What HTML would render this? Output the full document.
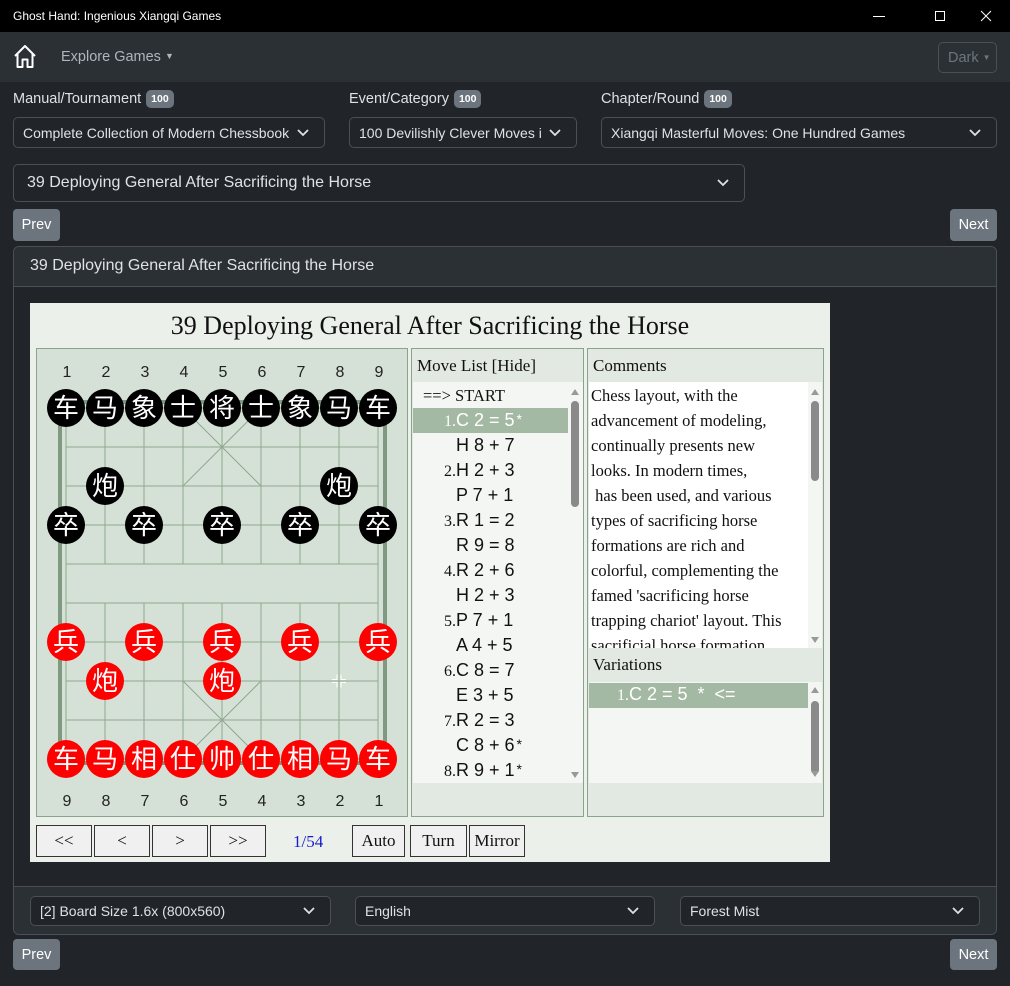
<!DOCTYPE html>
<html><head><meta charset="utf-8"><style>
*{box-sizing:border-box;margin:0;padding:0}
body{width:1010px;height:986px;background:#212529;font-family:"Liberation Sans",sans-serif;position:relative;overflow:hidden;color:#dee2e6}
.a{position:absolute}
.sel{position:absolute;border:1px solid #495057;border-radius:5px;background:#212529;color:#dee2e6;font-size:14px;padding-left:9px;display:flex;align-items:center}
.sel svg{position:absolute;right:15px;top:50%;margin-top:-4px}
.lbl{position:absolute;font-size:14.5px;color:#dee2e6}
.badge{display:inline-block;background:#6c757d;color:#fff;font-size:10.5px;font-weight:bold;border-radius:5px;padding:3px 5px;margin-left:5px;vertical-align:1px}
.btn{position:absolute;background:#6c757d;color:#fff;border-radius:4px;font-size:14.5px;display:flex;align-items:center;justify-content:center}
.gb{position:absolute;background:#f0f0f0;border:1px solid #333;font-family:"Liberation Serif",serif;font-size:17px;color:#111;display:flex;align-items:center;justify-content:center;height:32px;top:825px}
.mv{position:absolute;left:413px;width:155px;height:25px;font-size:18px;color:#111;white-space:nowrap}
.mv .n{position:absolute;right:112px;font-family:"Liberation Serif",serif;font-size:16px;top:5px}
.mv .m{position:absolute;left:43px;top:2px}
.mv .s{font-size:14px;vertical-align:2px;margin-left:2px}
.cm{position:absolute;left:591px;width:220px;font-family:"Liberation Serif",serif;font-size:16.5px;color:#111;line-height:25px}
</style></head><body>
<div class="a" style="left:0;top:0;width:1010px;height:32px;background:#000"></div>
<div class="a" style="left:13px;top:9px;font-size:12px;color:#fff">Ghost Hand: Ingenious Xiangqi Games</div>
<svg class="a" style="left:870px;top:8px" width="130" height="18"><line x1="3" y1="8.5" x2="15" y2="8.5" stroke="#fff"/><rect x="65.5" y="3.5" width="9" height="9" fill="none" stroke="#fff"/><path d="M111 3 L121 13 M121 3 L111 13" stroke="#fff"/></svg>
<div class="a" style="left:0;top:32px;width:1010px;height:50px;background:#2b3035"></div>
<svg class="a" style="left:13px;top:44px" width="24" height="26" viewBox="0 0 24 26"><path d="M2 12 L12 2 L22 12 M4.5 10 V23 H9.5 V15.5 H14.5 V23 H19.5 V10" fill="none" stroke="#fff" stroke-width="2" stroke-linejoin="round"/></svg>
<div class="a" style="left:61px;top:49px;font-size:14.5px;color:#adb5bd">Explore Games <span style="font-size:9px;vertical-align:2px">&#9660;</span></div>
<div class="a" style="left:938px;top:42px;width:59px;height:31px;border:1px solid #495057;border-radius:5px;color:#6c757d;font-size:14.5px;padding:7px 0 0 9px">Dark <span style="font-size:8px;vertical-align:2px">&#9660;</span></div>

<div class="lbl" style="left:13px;top:90px">Manual/Tournament<span class="badge">100</span></div>
<div class="lbl" style="left:349px;top:90px">Event/Category<span class="badge">100</span></div>
<div class="lbl" style="left:601px;top:90px">Chapter/Round<span class="badge">100</span></div>
<div class="sel" style="left:13px;top:117px;width:312px;height:31px">Complete Collection of Modern Chessbook<svg width="12" height="8"><path d="M1 1 L6 6 L11 1" fill="none" stroke="#dee2e6" stroke-width="1.8"/></svg></div>
<div class="sel" style="left:349px;top:117px;width:228px;height:31px">100 Devilishly Clever Moves i<svg width="12" height="8"><path d="M1 1 L6 6 L11 1" fill="none" stroke="#dee2e6" stroke-width="1.8"/></svg></div>
<div class="sel" style="left:601px;top:117px;width:396px;height:31px">Xiangqi Masterful Moves: One Hundred Games<svg width="12" height="8"><path d="M1 1 L6 6 L11 1" fill="none" stroke="#dee2e6" stroke-width="1.8"/></svg></div>
<div class="sel" style="left:13px;top:164px;width:732px;height:38px;font-size:16px;padding-left:13px">39 Deploying General After Sacrificing the Horse<svg width="12" height="8"><path d="M1 1 L6 6 L11 1" fill="none" stroke="#dee2e6" stroke-width="1.8"/></svg></div>
<div class="btn" style="left:13px;top:209px;width:47px;height:32px">Prev</div>
<div class="btn" style="left:950px;top:209px;width:47px;height:32px">Next</div>

<div class="a" style="left:13px;top:246px;width:984px;height:689px;border:1px solid #495057;border-radius:6px"></div>
<div class="a" style="left:14px;top:247px;width:982px;height:40px;background:#2b3035;border-bottom:1px solid #495057;border-radius:5px 5px 0 0"></div>
<div class="a" style="left:30px;top:257px;font-size:16px">39 Deploying General After Sacrificing the Horse</div>
<div class="a" style="left:14px;top:886px;width:982px;height:48px;background:#2b3035;border-top:1px solid #495057;border-radius:0 0 5px 5px"></div>

<div class="a" style="left:30px;top:303px;width:800px;height:559px;background:#ebf0eb"></div>
<div class="a" style="left:30px;top:311px;width:800px;text-align:center;font-family:'Liberation Serif',serif;font-size:26px;color:#111">39 Deploying General After Sacrificing the Horse</div>

<svg class="a" style="left:0;top:0" width="1010" height="986">
<rect x="36.5" y="348.5" width="371" height="468" fill="#d5e1d6" stroke="#8aa38a"/>
<rect x="60" y="402" width="325" height="361" fill="none" stroke="#7f9a80" stroke-width="4"/>
<g stroke="#8fa98f" stroke-width="1">
<line x1="66" y1="408" x2="378" y2="408"/><line x1="66" y1="447" x2="378" y2="447"/><line x1="66" y1="486" x2="378" y2="486"/><line x1="66" y1="525" x2="378" y2="525"/><line x1="66" y1="564" x2="378" y2="564"/><line x1="66" y1="603" x2="378" y2="603"/><line x1="66" y1="642" x2="378" y2="642"/><line x1="66" y1="681" x2="378" y2="681"/><line x1="66" y1="720" x2="378" y2="720"/><line x1="66" y1="759" x2="378" y2="759"/>
<line x1="66" y1="408" x2="66" y2="759"/><line x1="378" y1="408" x2="378" y2="759"/>
<line x1="105" y1="408" x2="105" y2="564"/><line x1="144" y1="408" x2="144" y2="564"/><line x1="183" y1="408" x2="183" y2="564"/><line x1="222" y1="408" x2="222" y2="564"/><line x1="261" y1="408" x2="261" y2="564"/><line x1="300" y1="408" x2="300" y2="564"/><line x1="339" y1="408" x2="339" y2="564"/>
<line x1="105" y1="603" x2="105" y2="759"/><line x1="144" y1="603" x2="144" y2="759"/><line x1="183" y1="603" x2="183" y2="759"/><line x1="222" y1="603" x2="222" y2="759"/><line x1="261" y1="603" x2="261" y2="759"/><line x1="300" y1="603" x2="300" y2="759"/><line x1="339" y1="603" x2="339" y2="759"/>
<line x1="183" y1="408" x2="261" y2="486"/><line x1="261" y1="408" x2="183" y2="486"/><line x1="183" y1="681" x2="261" y2="759"/><line x1="261" y1="681" x2="183" y2="759"/>
</g>
<g stroke="#fff" stroke-width="1" fill="none"><path d="M332 679.5h5v-5M346 679.5h-5v-5M332 682.5h5v5M346 682.5h-5v5"/></g>
<g font-family="Liberation Sans,sans-serif" font-size="16" fill="#222" text-anchor="middle">
<text x="67" y="377">1</text><text x="106" y="377">2</text><text x="145" y="377">3</text><text x="184" y="377">4</text><text x="223" y="377">5</text><text x="262" y="377">6</text><text x="301" y="377">7</text><text x="340" y="377">8</text><text x="379" y="377">9</text>
<text x="67" y="806">9</text><text x="106" y="806">8</text><text x="145" y="806">7</text><text x="184" y="806">6</text><text x="223" y="806">5</text><text x="262" y="806">4</text><text x="301" y="806">3</text><text x="340" y="806">2</text><text x="379" y="806">1</text>
</g>
<g fill="#000">
<circle cx="66" cy="408" r="19"/><circle cx="105" cy="408" r="19"/><circle cx="144" cy="408" r="19"/><circle cx="183" cy="408" r="19"/><circle cx="222" cy="408" r="19"/><circle cx="261" cy="408" r="19"/><circle cx="300" cy="408" r="19"/><circle cx="339" cy="408" r="19"/><circle cx="378" cy="408" r="19"/>
<circle cx="105" cy="486" r="19"/><circle cx="339" cy="486" r="19"/>
<circle cx="66" cy="525" r="19"/><circle cx="144" cy="525" r="19"/><circle cx="222" cy="525" r="19"/><circle cx="300" cy="525" r="19"/><circle cx="378" cy="525" r="19"/>
</g>
<g fill="#f00">
<circle cx="66" cy="642" r="19"/><circle cx="144" cy="642" r="19"/><circle cx="222" cy="642" r="19"/><circle cx="300" cy="642" r="19"/><circle cx="378" cy="642" r="19"/>
<circle cx="105" cy="681" r="19"/><circle cx="222" cy="681" r="19"/>
<circle cx="66" cy="759" r="19"/><circle cx="105" cy="759" r="19"/><circle cx="144" cy="759" r="19"/><circle cx="183" cy="759" r="19"/><circle cx="222" cy="759" r="19"/><circle cx="261" cy="759" r="19"/><circle cx="300" cy="759" r="19"/><circle cx="339" cy="759" r="19"/><circle cx="378" cy="759" r="19"/>
</g>
<g font-family="Noto Sans CJK SC,sans-serif" font-size="26" fill="#fff" text-anchor="middle">
<text x="66" y="417">车</text><text x="105" y="417">马</text><text x="144" y="417">象</text><text x="183" y="417">士</text><text x="222" y="417">将</text><text x="261" y="417">士</text><text x="300" y="417">象</text><text x="339" y="417">马</text><text x="378" y="417">车</text>
<text x="105" y="495">炮</text><text x="339" y="495">炮</text>
<text x="66" y="534">卒</text><text x="144" y="534">卒</text><text x="222" y="534">卒</text><text x="300" y="534">卒</text><text x="378" y="534">卒</text>
<text x="66" y="651">兵</text><text x="144" y="651">兵</text><text x="222" y="651">兵</text><text x="300" y="651">兵</text><text x="378" y="651">兵</text>
<text x="105" y="690">炮</text><text x="222" y="690">炮</text>
<text x="66" y="768">车</text><text x="105" y="768">马</text><text x="144" y="768">相</text><text x="183" y="768">仕</text><text x="222" y="768">帅</text><text x="261" y="768">仕</text><text x="300" y="768">相</text><text x="339" y="768">马</text><text x="378" y="768">车</text>
</g>
<rect x="411.5" y="348.5" width="172" height="468" fill="#e2e9e2" stroke="#8aa38a"/>
<rect x="413" y="382" width="155" height="401" fill="#f4f6f4"/>
<rect x="568" y="382" width="15" height="401" fill="#f4f6f4"/>
<rect x="571" y="401" width="8" height="106" rx="4" fill="#8a8a8a"/>
<path d="M571 395 L575 389 L579 395Z M571 772 L575 778 L579 772Z" fill="#999"/>
<rect x="413" y="408" width="155" height="25" fill="#a3b9a3"/>
<rect x="587.5" y="348.5" width="236" height="468" fill="#e2e9e2" stroke="#8aa38a"/>
<rect x="589" y="382" width="219" height="266" fill="#fff"/>
<rect x="808" y="382" width="14" height="266" fill="#f4f6f4"/>
<rect x="811" y="401" width="8" height="80" rx="4" fill="#8a8a8a"/>
<path d="M811 395 L815 389 L819 395Z M811 637 L815 643 L819 637Z" fill="#999"/>
<rect x="589" y="682" width="219" height="101" fill="#f4f6f4"/>
<rect x="808" y="682" width="14" height="101" fill="#f4f6f4"/>
<rect x="811" y="701" width="8" height="73" rx="4" fill="#8a8a8a"/>
<path d="M811 693 L815 687 L819 693Z M811 771 L815 777 L819 771Z" fill="#999"/>
<rect x="589" y="683" width="219" height="25" fill="#a3b9a3"/>
</svg>

<div class="a" style="left:417px;top:356px;font-family:'Liberation Serif',serif;font-size:17px;color:#111">Move List [Hide]</div>
<div class="a" style="left:593px;top:356px;font-family:'Liberation Serif',serif;font-size:17px;color:#111">Comments</div>
<div class="a" style="left:593px;top:655px;font-family:'Liberation Serif',serif;font-size:17px;color:#111">Variations</div>
<div class="a" style="left:423px;top:386px;font-family:'Liberation Serif',serif;font-size:16.5px;color:#111">==&gt; START</div>

<div class="mv" style="top:408px;color:#fff"><span class="n">1.</span><span class="m">C 2 = 5<span class="s">*</span></span></div>
<div class="mv" style="top:433px"><span class="m">H 8 + 7</span></div>
<div class="mv" style="top:458px"><span class="n">2.</span><span class="m">H 2 + 3</span></div>
<div class="mv" style="top:483px"><span class="m">P 7 + 1</span></div>
<div class="mv" style="top:508px"><span class="n">3.</span><span class="m">R 1 = 2</span></div>
<div class="mv" style="top:533px"><span class="m">R 9 = 8</span></div>
<div class="mv" style="top:558px"><span class="n">4.</span><span class="m">R 2 + 6</span></div>
<div class="mv" style="top:583px"><span class="m">H 2 + 3</span></div>
<div class="mv" style="top:608px"><span class="n">5.</span><span class="m">P 7 + 1</span></div>
<div class="mv" style="top:633px"><span class="m">A 4 + 5</span></div>
<div class="mv" style="top:658px"><span class="n">6.</span><span class="m">C 8 = 7</span></div>
<div class="mv" style="top:683px"><span class="m">E 3 + 5</span></div>
<div class="mv" style="top:708px"><span class="n">7.</span><span class="m">R 2 = 3</span></div>
<div class="mv" style="top:733px"><span class="m">C 8 + 6<span class="s">*</span></span></div>
<div class="mv" style="top:758px"><span class="n">8.</span><span class="m">R 9 + 1<span class="s">*</span></span></div>

<div class="a" style="left:589px;top:382px;width:219px;height:266px;overflow:hidden">
<div class="cm" style="left:2px;top:1px">Chess layout, with the<br>advancement of modeling,<br>continually presents new<br>looks. In modern times,<br>&nbsp;has been used, and various<br>types of sacrificing horse<br>formations are rich and<br>colorful, complementing the<br>famed 'sacrificing horse<br>trapping chariot' layout. This<br>sacrificial horse formation</div>
</div>
<div class="a" style="left:617px;top:684px;font-size:18px;color:#fff;white-space:nowrap"><span style="font-family:'Liberation Serif',serif;font-size:16px">1.</span>C 2 = 5 &nbsp;* &nbsp;&lt;=</div>

<div class="gb" style="left:36px;width:56px">&lt;&lt;</div>
<div class="gb" style="left:94px;width:56px">&lt;</div>
<div class="gb" style="left:152px;width:56px">&gt;</div>
<div class="gb" style="left:210px;width:56px">&gt;&gt;</div>
<div class="a" style="left:293px;top:832px;font-family:'Liberation Serif',serif;font-size:17px;color:#1a1acc">1/54</div>
<div class="gb" style="left:352px;width:53px">Auto</div>
<div class="gb" style="left:410px;width:57px">Turn</div>
<div class="gb" style="left:469px;width:56px">Mirror</div>

<div class="sel" style="left:30px;top:896px;width:301px;height:30px">[2] Board Size 1.6x (800x560)<svg width="12" height="8"><path d="M1 1 L6 6 L11 1" fill="none" stroke="#dee2e6" stroke-width="1.8"/></svg></div>
<div class="sel" style="left:355px;top:896px;width:300px;height:30px">English<svg width="12" height="8"><path d="M1 1 L6 6 L11 1" fill="none" stroke="#dee2e6" stroke-width="1.8"/></svg></div>
<div class="sel" style="left:680px;top:896px;width:300px;height:30px">Forest Mist<svg width="12" height="8"><path d="M1 1 L6 6 L11 1" fill="none" stroke="#dee2e6" stroke-width="1.8"/></svg></div>
<div class="btn" style="left:13px;top:939px;width:47px;height:31px">Prev</div>
<div class="btn" style="left:950px;top:939px;width:47px;height:31px">Next</div>
</body></html>
